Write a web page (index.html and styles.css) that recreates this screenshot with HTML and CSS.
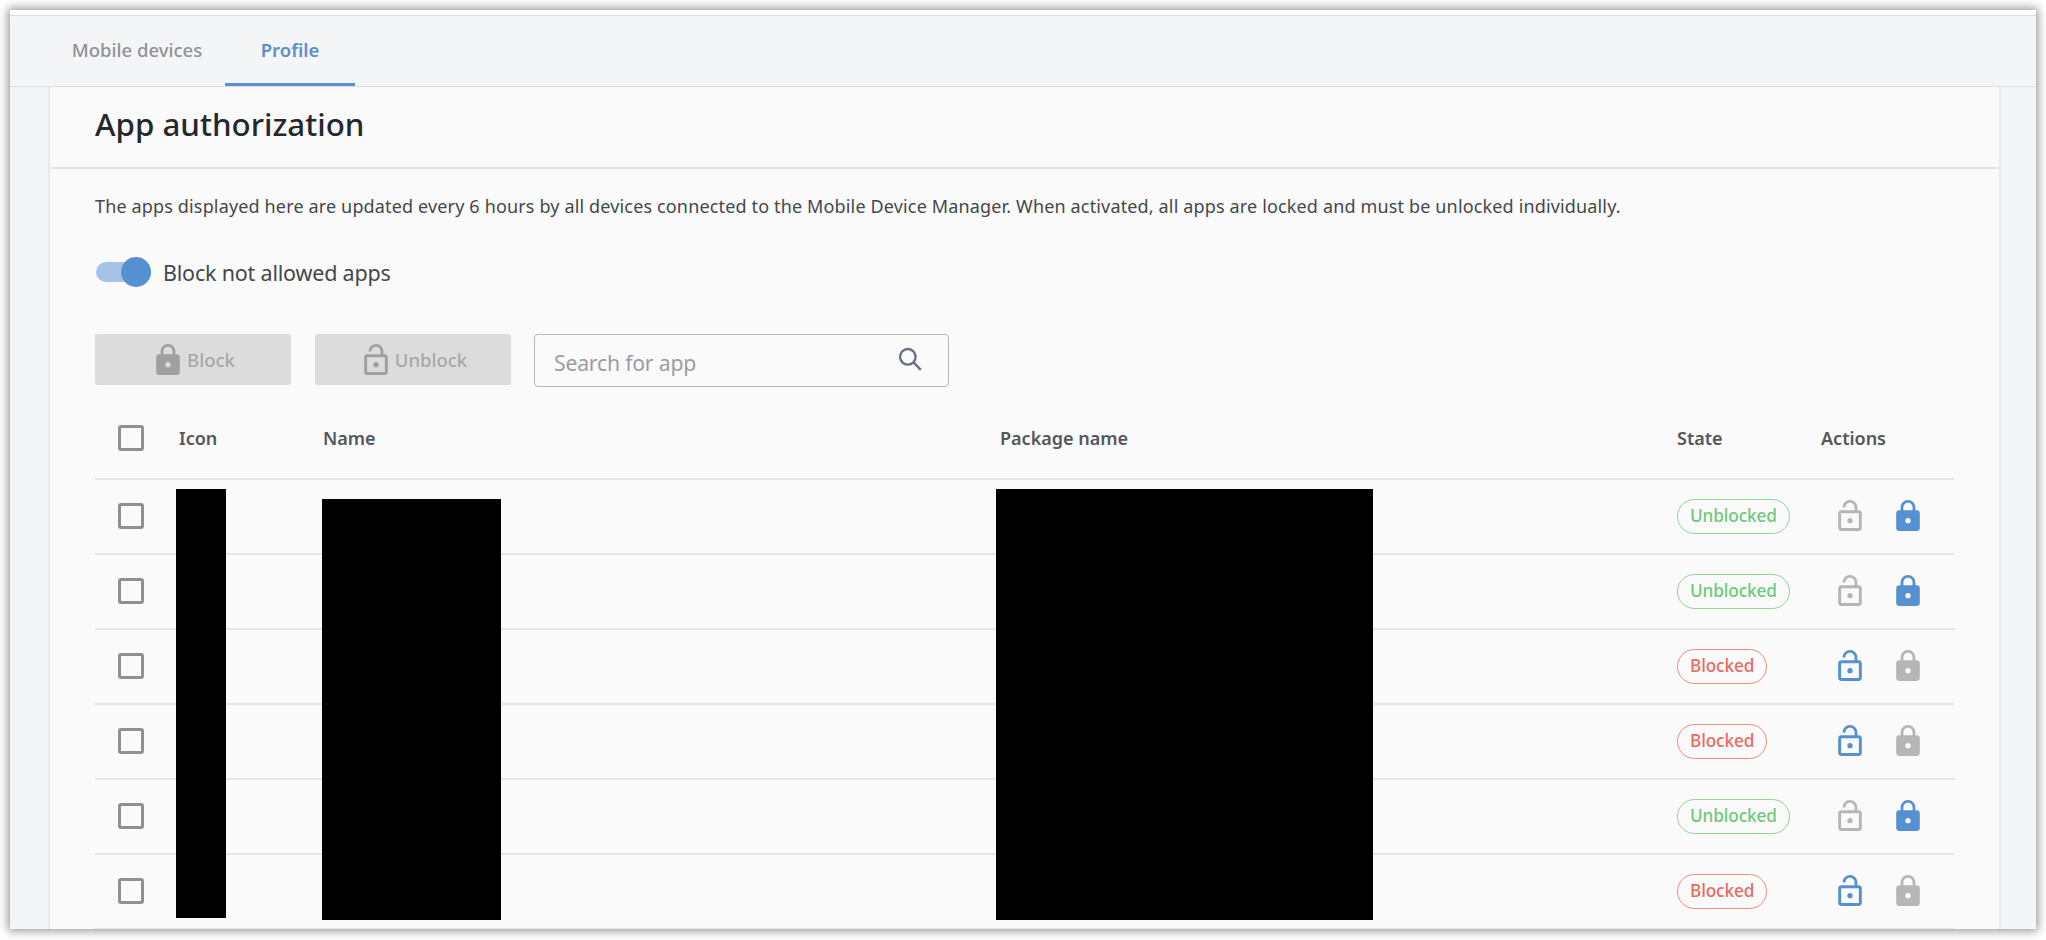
FILE: index.html
```html
<!DOCTYPE html>
<html lang="en">
<head>
<meta charset="utf-8">
<title>App authorization</title>
<link rel="stylesheet" href="styles.css">
</head>
<body>
<svg class="sprites" width="0" height="0" aria-hidden="true">
  <symbol id="lock" viewBox="4 1 16 21">
    <path fill-rule="evenodd" d="M18 8h-1V6c0-2.76-2.24-5-5-5S7 3.24 7 6v2H6c-1.1 0-2 .9-2 2v10c0 1.1.9 2 2 2h12c1.1 0 2-.9 2-2V10c0-1.1-.9-2-2-2zM8.9 8V6c0-1.71 1.39-3.1 3.1-3.1 1.71 0 3.1 1.39 3.1 3.1v2zM12 16.8a1.8 1.8 0 1 1 0-3.6 1.8 1.8 0 0 1 0 3.6z"/>
  </symbol>
  <symbol id="unlock" viewBox="4 1 16 21">
    <path fill-rule="evenodd" d="M18 8h-1V6c0-2.76-2.24-5-5-5S7 3.24 7 6h1.9c0-1.71 1.39-3.1 3.1-3.1 1.71 0 3.1 1.39 3.1 3.1v2H6c-1.1 0-2 .9-2 2v10c0 1.1.9 2 2 2h12c1.1 0 2-.9 2-2V10c0-1.1-.9-2-2-2zm0 12H6V10h12zM12 16.8a1.8 1.8 0 1 0 0-3.6 1.8 1.8 0 0 0 0 3.6z"/>
  </symbol>
</svg>
<div class="window">
  <nav class="tabs">
    <a class="tab tab-first">Mobile devices</a>
    <a class="tab tab-active">Profile</a>
  </nav>
  <main class="card">
    <h1 class="card-title">App authorization</h1>
    <div class="card-body">
      <p class="intro">The apps displayed here are updated every 6 hours by all devices connected to the Mobile Device Manager. When activated, all apps are locked and must be unlocked individually.</p>
      <div class="switch-row">
        <span class="switch"><span class="switch-thumb"></span></span>
        <span class="switch-label">Block not allowed apps</span>
      </div>
      <div class="toolbar">
        <button class="btn"><svg class="btn-icon"><use href="#lock"/></svg>Block</button>
        <button class="btn"><svg class="btn-icon"><use href="#unlock"/></svg>Unblock</button>
        <div class="search">
          <span class="search-text">Search for app</span>
          <svg class="search-icon" viewBox="0 0 24 24"><circle cx="10" cy="10" r="7.2"/><path d="M15.2 15.2 22 22"/></svg>
        </div>
      </div>
      <div class="table">
        <div class="row head">
          <span class="cell-check"><span class="checkbox"></span></span>
          <span>Icon</span><span>Name</span><span>Package name</span><span>State</span><span>Actions</span>
        </div>
        <div class="row">
          <span class="cell-check"><span class="checkbox"></span></span><span></span><span></span><span></span>
          <span><span class="badge ok">Unblocked</span></span>
          <span class="actions"><svg class="act muted"><use href="#unlock"/></svg><svg class="act blue"><use href="#lock"/></svg></span>
        </div>
        <div class="row">
          <span class="cell-check"><span class="checkbox"></span></span><span></span><span></span><span></span>
          <span><span class="badge ok">Unblocked</span></span>
          <span class="actions"><svg class="act muted"><use href="#unlock"/></svg><svg class="act blue"><use href="#lock"/></svg></span>
        </div>
        <div class="row">
          <span class="cell-check"><span class="checkbox"></span></span><span></span><span></span><span></span>
          <span><span class="badge bad">Blocked</span></span>
          <span class="actions"><svg class="act blue"><use href="#unlock"/></svg><svg class="act muted"><use href="#lock"/></svg></span>
        </div>
        <div class="row">
          <span class="cell-check"><span class="checkbox"></span></span><span></span><span></span><span></span>
          <span><span class="badge bad">Blocked</span></span>
          <span class="actions"><svg class="act blue"><use href="#unlock"/></svg><svg class="act muted"><use href="#lock"/></svg></span>
        </div>
        <div class="row">
          <span class="cell-check"><span class="checkbox"></span></span><span></span><span></span><span></span>
          <span><span class="badge ok">Unblocked</span></span>
          <span class="actions"><svg class="act muted"><use href="#unlock"/></svg><svg class="act blue"><use href="#lock"/></svg></span>
        </div>
        <div class="row">
          <span class="cell-check"><span class="checkbox"></span></span><span></span><span></span><span></span>
          <span><span class="badge bad">Blocked</span></span>
          <span class="actions"><svg class="act blue"><use href="#unlock"/></svg><svg class="act muted"><use href="#lock"/></svg></span>
        </div>
        <div class="redact redact-icon"></div>
        <div class="redact redact-name"></div>
        <div class="redact redact-package"></div>
      </div>
    </div>
  </main>
</div>
</body>
</html>
```

FILE: styles.css
```css
* { box-sizing: border-box; }
html, body { margin: 0; height: 100%; }
body {
  background: #fff;
  padding: 10px;
  overflow: hidden;
  font-family: "Noto Sans", "Open Sans", sans-serif;
  color: #3c3c3c;
}
.sprites { position: absolute; }

.window {
  width: 2026px;
  height: 919px;
  padding-top: 5px;
  background: #f4f5f7;
  overflow: hidden;
  box-shadow: 0 0 9px 2px rgba(0, 0, 0, .42);
  display: flex;
  flex-direction: column;
  position: relative;
}
.window::before {
  content: "";
  position: absolute;
  inset: 0 0 auto 0;
  height: 5px;
  background: #fff;
}

.tabs {
  flex: none;
  height: 72px;
  display: flex;
  padding-left: 39px;
  border-top: 1px solid #dcdee0;
  border-bottom: 1px solid #dcdee0;
  font-size: 18.5px;
  font-weight: 500;
}
.tab {
  height: 70px;
  display: flex;
  align-items: center;
  justify-content: center;
  padding-bottom: 3px;
  color: #8f9296;
}
.tab-first { width: 176px; }
.tab-active {
  width: 130px;
  color: #5d8fcc;
  font-weight: 600;
  border-bottom: 3px solid #5590d2;
  padding-bottom: 0;
}

.card {
  flex: 1;
  min-height: 0;
  margin: 0 35px 0 38px;
  background: #fafafa;
  border-left: 2px solid #e8e9eb;
  border-right: 2px solid #e8e9eb;
}
.card-title {
  margin: 0;
  height: 82px;
  padding: 0 0 6px 45px;
  display: flex;
  align-items: center;
  font-size: 31.3px;
  font-weight: 500;
  color: #26282b;
  border-bottom: 2px solid #e4e5e7;
}
.card-body { padding: 0 45px; }
.intro {
  margin: 0;
  padding-top: 24px;
  height: 66px;
  font-size: 18px;
  line-height: 26px;
  letter-spacing: .15px;
  white-space: nowrap;
  color: #45474a;
}
.switch-row {
  margin-top: 22px;
  height: 30px;
  display: flex;
  align-items: center;
  gap: 12px;
}
.switch {
  position: relative;
  width: 55px;
  height: 20px;
  margin-left: 1px;
  border-radius: 10px;
  background: #a5c3e6;
}
.switch-thumb {
  position: absolute;
  right: 0;
  top: -5px;
  width: 30px;
  height: 30px;
  border-radius: 50%;
  background: #5590d2;
}
.switch-label { font-size: 21.5px; color: #45474a; letter-spacing: -.2px; }

.toolbar {
  margin-top: 47px;
  display: flex;
  align-items: flex-start;
  gap: 24px;
}
.btn {
  width: 196px;
  height: 51px;
  padding: 0 0 0 5px;
  display: flex;
  align-items: center;
  justify-content: center;
  gap: 7px;
  border: 0;
  border-radius: 3px;
  background: #dcdcdc;
  color: #a8a8a8;
  font: 500 18.5px "Noto Sans", sans-serif;
}
.btn-icon { width: 24px; height: 31px; fill: #a0a0a0; }
.search {
  width: 415px;
  height: 53px;
  margin-left: -1px;
  padding: 0 25px 0 19px;
  display: flex;
  align-items: center;
  justify-content: space-between;
  border: 1.5px solid #b5b7bd;
  border-radius: 4px;
}
.search-text { font-size: 21.2px; color: #9a9da2; letter-spacing: -.2px; padding-top: 3px; }
.search-icon { width: 26px; height: 26px; margin-bottom: 3px; fill: none; stroke: #667085; stroke-width: 2.2; }

.table { position: relative; margin-top: 14px; }
.row {
  height: 75px;
  padding-bottom: 2px;
  display: grid;
  grid-template-columns: 84px 144px 677px 677px 144px 1fr;
  align-items: center;
  border-bottom: 2px solid #e6e6e8;
}
.head {
  height: 79px;
  font-size: 18px;
  font-weight: 600;
  color: #55575a;
  padding-bottom: 4px;
}
.cell-check { display: flex; padding-left: 23px; }
.checkbox {
  width: 26px;
  height: 26px;
  border: 3px solid #8f9092;
  border-radius: 3px;
}
.badge {
  display: inline-block;
  height: 35px;
  margin-top: 2px;
  line-height: 31px;
  padding: 0 12px;
  border: 1.5px solid;
  border-radius: 18px;
  font-size: 17.2px;
  font-weight: 500;
  letter-spacing: -.1px;
}
.badge.ok { color: #6fc87a; border-color: #8ed697; }
.badge.bad { color: #ea6a60; border-color: #ee8a82; }
.actions { display: flex; gap: 34px; padding-left: 17px; }
.act { width: 24px; height: 31px; }
.act.muted { fill: #b6b6b6; }
.act.blue { fill: #5590d2; }

.redact { position: absolute; background: #000; }
.redact-icon { left: 81px; top: 88px; width: 50px; height: 429px; }
.redact-name { left: 227px; top: 98px; width: 179px; height: 421px; }
.redact-package { left: 901px; top: 88px; width: 377px; height: 431px; }
```
